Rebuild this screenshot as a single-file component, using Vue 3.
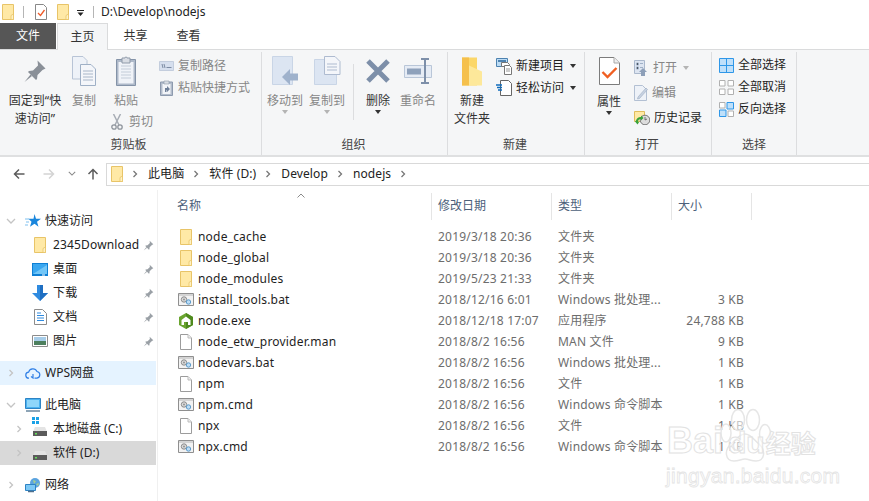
<script setup>
const files = [
  { name: 'node_cache', icon: 'folder', date: '2019/3/18 20:36', type: '文件夹', size: '' },
  { name: 'node_global', icon: 'folder', date: '2019/3/18 20:36', type: '文件夹', size: '' },
  { name: 'node_modules', icon: 'folder', date: '2019/5/23 21:33', type: '文件夹', size: '' },
  { name: 'install_tools.bat', icon: 'bat', date: '2018/12/16 6:01', type: 'Windows 批处理...', size: '3 KB' },
  { name: 'node.exe', icon: 'node', date: '2018/12/18 17:07', type: '应用程序', size: '24,788 KB' },
  { name: 'node_etw_provider.man', icon: 'file', date: '2018/8/2 16:56', type: 'MAN 文件', size: '9 KB' },
  { name: 'nodevars.bat', icon: 'bat', date: '2018/8/2 16:56', type: 'Windows 批处理...', size: '1 KB' },
  { name: 'npm', icon: 'file', date: '2018/8/2 16:56', type: '文件', size: '1 KB' },
  { name: 'npm.cmd', icon: 'bat', date: '2018/8/2 16:56', type: 'Windows 命令脚本', size: '1 KB' },
  { name: 'npx', icon: 'file', date: '2018/8/2 16:56', type: '文件', size: '1 KB' },
  { name: 'npx.cmd', icon: 'bat', date: '2018/8/2 16:56', type: 'Windows 命令脚本', size: '1 KB' },
]
const quick = [
  { name: '2345Download', icon: 'folder', w: 12, h: 16, ml: 2 },
  { name: '桌面', icon: 'desktop', w: 16, h: 13, ml: 0 },
  { name: '下载', icon: 'download', w: 16, h: 16, ml: 0 },
  { name: '文档', icon: 'docs', w: 13, h: 16, ml: 2 },
  { name: '图片', icon: 'pics', w: 16, h: 12, ml: 0 },
]
const crumbs = ['此电脑', '软件 (D:)', 'Develop', 'nodejs']
</script>

<template>
  <div class="page">
    <svg class="defs" aria-hidden="true">
      <symbol id="folder" viewBox="0 0 12 16">
        <path d="M.5.500h11v15H.5z" fill="#ffe9a6" stroke="#e8c468"/>
        <path d="M9 15.500v-4l2.500-1.500v5.500z" fill="#fff2c4" stroke="#e8c468" stroke-width=".8"/>
      </symbol>
      <symbol id="file" viewBox="0 0 12 16">
        <path d="M.5.500h7.500l3.500 3.500v11.500H.5z" fill="#fff" stroke="#9c9c9c"/>
        <path d="M8 .5v3.500h3.500" fill="#eee" stroke="#bdbdbd"/>
      </symbol>
      <symbol id="bat" viewBox="0 0 16 13">
        <path d="M.5.500h15v12H.5z" fill="#f2f2f2" stroke="#8f8f8f"/>
        <path d="M1 1h14v2H1z" fill="#d4d4d4"/>
        <circle cx="6" cy="6.500" r="2.700" fill="#dcdcdc" stroke="#8a8a8a"/>
        <circle cx="6" cy="6.500" r=".9" fill="#8a8a8a"/>
        <circle cx="10.500" cy="9" r="2.200" fill="#bcdcf5" stroke="#5d9ccc"/>
      </symbol>
      <symbol id="node" viewBox="0 0 16 16">
        <path d="M8 0l7 4v8l-7 4-7-4V4z" fill="#6aa52f"/>
        <path d="M8 0l7 4v8l-7 4z" fill="#4f8a1f"/>
        <path d="M8 3.500L12.500 7v5H10V9H6v3H3.500V7z" fill="#fff"/>
      </symbol>
      <symbol id="pin" viewBox="0 0 24 24">
        <path d="M14.500 1.500l8 8-3 1.500-5 5-.5 4-1 1-8-8 1-1 4-.5 5-5z" fill="currentColor"/>
        <path d="M7.500 15.500L1.500 23l7.500-6z" fill="currentColor"/>
      </symbol>
      <symbol id="desktop" viewBox="0 0 16 13">
        <path d="M0 0h16v13H0z" fill="#0e7fd4"/>
        <path d="M1 1h14v10H1z" fill="#3aa7f0"/>
        <path d="M1 11l14-9v9z" fill="#72c6f7"/>
        <path d="M10 11.500h3v1h-3z" fill="#fff"/>
      </symbol>
      <symbol id="download" viewBox="0 0 16 16">
        <path d="M5 0h6v8h5l-8 8-8-8h5z" fill="#2f8be0"/>
        <path d="M8 0h3v8h5l-8 8z" fill="#1f6fc2"/>
      </symbol>
      <symbol id="docs" viewBox="0 0 13 16">
        <path d="M.5.500h8l4 4v11H.500z" fill="#fff" stroke="#8c8c8c"/>
        <path d="M3 4h4M3 6.500h7M3 9h7M3 11.500h7" stroke="#2f8be0"/>
      </symbol>
      <symbol id="pics" viewBox="0 0 16 12">
        <path d="M.5.500h15v11H.5z" fill="#fff" stroke="#8c8c8c"/>
        <path d="M2 2h12v4H2z" fill="#a7cde9"/>
        <path d="M2 6h12v4H2z" fill="#4d7f5e"/>
      </symbol>
      <symbol id="star" viewBox="0 0 16 14">
        <path d="M9.500 0l1.500 4.700h5l-4 3 1.500 5-4-3-4.500 3 1.500-5-3-3h5z" fill="#1a86dc"/>
        <path d="M0 5h4M1 8h3M0 11h3" stroke="#7fc0ef"/>
      </symbol>
      <symbol id="wps" viewBox="0 0 16 12">
        <path d="M4 11.200a3 3 0 0 1-.4-6A4.500 4.500 0 0 1 12 4.500a3.400 3.400 0 0 1 0 6.700H9.500M8 7v4l-2-1.500" fill="none" stroke="#2f7fe6" stroke-width="1.200"/>
      </symbol>
      <symbol id="pc" viewBox="0 0 16 15">
        <path d="M.5.500h15v10H.5z" fill="#4bb2f0" stroke="#2d83c4"/>
        <path d="M2 2h12v7H2z" fill="#8fd6fa"/>
        <path d="M1 12h14v2H1z" fill="#8da4b6"/>
      </symbol>
      <symbol id="drive" viewBox="0 0 14 9">
        <path d="M2 0h10l2 4.500H0z" fill="#e4e4e4"/>
        <path d="M0 4h14v5H0z" fill="#5b5b5b"/>
        <path d="M2 6h2v1.500H2z" fill="#64e05a"/>
      </symbol>
      <symbol id="win" viewBox="0 0 7 7">
        <path d="M0 0h3v3H0zM4 0h3v3H4zM0 4h3v3H0zM4 4h3v3H4z" fill="#1aa1e6"/>
      </symbol>
      <symbol id="net" viewBox="0 0 16 15">
        <circle cx="10" cy="5" r="5" fill="#5ba4df"/>
        <path d="M8 2l3 1-2 3zM11 6l3-1-1 3z" fill="#a6cf8e"/>
        <path d="M.5 6.500h10v6H.5z" fill="#7cc8f5" stroke="#2d83c4"/>
        <path d="M3 13.500h6" stroke="#4f6f8c" stroke-width="1.500"/>
      </symbol>
      <symbol id="chev" viewBox="0 0 8 8"><path d="M2.500 1L5.500 4l-3 3" fill="none" stroke="currentColor" stroke-width="1.300"/></symbol>
      <symbol id="down" viewBox="0 0 10 6"><path d="M1 1l4 4 4-4" fill="none" stroke="currentColor" stroke-width="1.300"/></symbol>
      <symbol id="pages" viewBox="0 0 24 30">
        <path d="M.5.500H11l4 4V23H.5z" fill="#eef2f8" stroke="#b8c4d6"/>
        <path d="M8.500 8.500H19l4.500 4.500v16.500h-15z" fill="#f4f6fa" stroke="#9fb0c6"/>
        <path d="M11 15h10M11 18h10M11 21h10M11 24h10" stroke="#a8b6c8"/>
      </symbol>
      <symbol id="clip" viewBox="0 0 20 30">
        <path d="M.5 3.500h19v26H.5z" fill="#aeb9c9" stroke="#8493a8"/>
        <path d="M2.500 6h15v21.500h-15z" fill="#f0f3f8"/>
        <path d="M5 10h10M5 13h10M5 16h10M5 19h10M5 22h10" stroke="#c3ccd8"/>
        <path d="M6 2h3a1 1 0 0 1 2 0h3v5H6z" fill="#d9dde4" stroke="#8f9aa9"/>
      </symbol>
      <symbol id="scissors" viewBox="0 0 12 16">
        <path d="M2.500 0L8 11M9.500 0L4 11" stroke="#a7adb5" stroke-width="1.500"/>
        <circle cx="3" cy="13" r="2.200" fill="none" stroke="#8f959d" stroke-width="1.300"/>
        <circle cx="9" cy="13" r="2.200" fill="none" stroke="#8f959d" stroke-width="1.300"/>
      </symbol>
      <symbol id="path" viewBox="0 0 15 10">
        <path d="M.5.500h14v9H.5z" fill="#d6dfee" stroke="#c3cddd"/>
        <path d="M3 3l1 4M5 3l1 4M7.500 6.500h5" stroke="#7c8ba3"/>
      </symbol>
      <symbol id="shortcut" viewBox="0 0 13 16">
        <path d="M.5 2h12v13.500H.5z" fill="#b3bdcc" stroke="#8d9aae"/>
        <path d="M2.500 4h8v10h-8z" fill="#f2f4f8"/>
        <path d="M4 1h5v3H4z" fill="#d9dde4" stroke="#8f9aa9" stroke-width=".6"/>
        <path d="M5 12V8h2V6l3 3-3 3v-2H6.500v2z" fill="#6f8099"/>
      </symbol>
      <symbol id="move" viewBox="0 0 27 30">
        <path d="M.5.500h20v28H.5z" fill="#dce5f2" stroke="#c9d5e6"/>
        <path d="M10 21l8-8v4.500h8v7h-8V29z" fill="#9fb2cc"/>
      </symbol>
      <symbol id="copyto" viewBox="0 0 27 30">
        <path d="M.5 3.500h22v25H.5z" fill="#dce5f2" stroke="#c9d5e6"/>
        <path d="M10.500.500H21l5 5v13H10.500z" fill="#f4f6fa" stroke="#aebbd0"/>
        <path d="M13 8h10M13 11h10M13 14h10" stroke="#aebbd0"/>
      </symbol>
      <symbol id="del" viewBox="0 0 26 26">
        <path d="M3 3l20 20M23 3L3 23" stroke="#7d8fa9" stroke-width="5"/>
      </symbol>
      <symbol id="rename" viewBox="0 0 28 26">
        <path d="M.5 7.500h27v12H.5z" fill="#e6ecf5" stroke="#b9c6d8"/>
        <path d="M3 10.500h14v6H3z" fill="#8ea1bb"/>
        <path d="M17 1h8M17 25h8M21 1v24" stroke="#7d8fa9" stroke-width="2"/>
      </symbol>
      <symbol id="newfolder" viewBox="0 0 20 29">
        <path d="M0 1h15v28H0z" fill="#fbd76a"/>
        <path d="M0 1h7v28H0z" fill="#f5c04c"/>
        <path d="M7 9l13 6v14H7z" fill="#fde89a"/>
      </symbol>
      <symbol id="newitem" viewBox="0 0 16 17">
        <path d="M.5.500h11v8H.5z" fill="#bcdcf5" stroke="#4d82b0"/>
        <path d="M2 2h8v2H2z" fill="#4d82b0"/>
        <path d="M5.500 4.500h6l2 2v2H5.500z" fill="#fff" stroke="#777"/>
        <path d="M8.500 7.500h5l2 2v7h-7z" fill="#fff" stroke="#777"/>
        <path d="M10 11h4M10 13h4" stroke="#999"/>
      </symbol>
      <symbol id="easy" viewBox="0 0 16 16">
        <path d="M4.500.500h8l3 3v12h-11z" fill="#fff" stroke="#666"/>
        <path d="M0 5h6M1 7.500h5M2 10h4" stroke="#0f6cbd" stroke-width="1.300"/>
      </symbol>
      <symbol id="props" viewBox="0 0 21 28">
        <path d="M.5.500H15l5.500 5.500v21.500H.5z" fill="#fff" stroke="#7c7c7c"/>
        <path d="M15 .5V6h5.500" fill="#eee" stroke="#a8a8a8"/>
        <path d="M3.500 15l5 5 9-9" fill="none" stroke="#f05f22" stroke-width="2.400"/>
      </symbol>
      <symbol id="open" viewBox="0 0 15 16">
        <path d="M.5.500h10v13H.500z" fill="#dde5f1" stroke="#aab8cc"/>
        <path d="M2.500 3h2v2h-2zM2.500 7h2v2h-2zM6 3.500h3M6 7.500h3" stroke="#9fb0c6"/>
        <path d="M7 16v-4H5l4-4 4 4h-2v4z" fill="#8d9fb8"/>
      </symbol>
      <symbol id="edit" viewBox="0 0 14 16">
        <path d="M.5.500h8l4 4v11H.5z" fill="#eef2f8" stroke="#b3c0d3"/>
        <path d="M4 12L12 3l1.500 1.500-8 9-2 .5z" fill="#c7d2e2" stroke="#9dacc1" stroke-width=".6"/>
      </symbol>
      <symbol id="history" viewBox="0 0 16 14">
        <path d="M.5.500h10v10H.5z" fill="#ffe9a6" stroke="#e0bd5c"/>
        <circle cx="11" cy="9" r="4.800" fill="#dcdcdc" stroke="#777"/>
        <path d="M11 6v3l2-1" fill="none" stroke="#555" stroke-width=".8"/>
        <path d="M2 9.500a5 5 0 0 1 5-3.500v-1.500l2.500 2.500L7 9.500V8a3 3 0 0 0-3 3l1.500-.5L3.500 13.500 1 10.500z" fill="#3aa33a"/>
      </symbol>
      <symbol id="selAll" viewBox="0 0 15 15">
        <path d="M.5.500h14v14H.5z" fill="#bfe0fa" stroke="#2e97e8"/>
        <path d="M7.500 0v15M0 7.500h15" stroke="#2e97e8"/>
      </symbol>
      <symbol id="selNone" viewBox="0 0 15 15">
        <path d="M.5.500h5.500v5.500H.5zM9 .5h5.500v5.500H9zM.5 9H6v5.500H.5zM9 9h5.500v5.500H9z" fill="#fff" stroke="#b0b0b0"/>
      </symbol>
      <symbol id="selInv" viewBox="0 0 15 15">
        <path d="M8 .5h6.500V7H8zM.5 8H7v6.500H.5z" fill="#bfe0fa" stroke="#2e97e8"/>
        <path d="M.5.500h5.500v5.500H.5zM9 9h5.500v5.500H9z" fill="#fff" stroke="#b0b0b0"/>
      </symbol>
    </svg>

    <div class="titlebar">
      <svg class="folder-sm"><use href="#folder"/></svg>
      <i class="tsep"></i>
      <svg class="tdoc" viewBox="0 0 12 16">
        <path d="M.5.500h8l3 3v12H.5z" fill="#fff" stroke="#888"/>
        <path d="M3 9l2.500 2.500L9.500 6" fill="none" stroke="#ef5a28" stroke-width="1.300"/>
      </svg>
      <svg class="folder-sm second"><use href="#folder"/></svg>
      <svg class="qdown" viewBox="0 0 8 8"><path d="M0 1h7v1H0zM.5 3.500h6L3.500 7z" fill="#222"/></svg>
      <i class="tsep last"></i>
      <span class="title">D:\Develop\nodejs</span>
    </div>

    <div class="tabs">
      <div class="tab file">文件</div>
      <div class="tab home">主页</div>
      <div class="tab share">共享</div>
      <div class="tab view">查看</div>
    </div>

    <div class="ribbon">
      <section class="grp g1">
        <div class="grp-body">
          <div class="big pinb"><svg class="ic pin-ic" width="24" height="24"><use href="#pin"/></svg><span>固定到“快<br>速访问”</span></div>
          <div class="big copyb dim"><svg class="ic" width="24" height="30"><use href="#pages"/></svg><span>复制</span></div>
          <div class="pastecol">
            <div class="big dim"><svg class="ic" width="20" height="30"><use href="#clip"/></svg><span>粘贴</span></div>
            <div class="small dim cut"><svg width="12" height="16"><use href="#scissors"/></svg><span>剪切</span></div>
          </div>
          <div class="smalls clipsmall dim">
            <div class="small"><svg width="15" height="10"><use href="#path"/></svg><span>复制路径</span></div>
            <div class="small"><svg class="inset" width="13" height="16"><use href="#shortcut"/></svg><span>粘贴快捷方式</span></div>
          </div>
        </div>
        <div class="grp-label">剪贴板</div>
      </section>

      <section class="grp g2">
        <div class="grp-body">
          <div class="big w42 dim"><svg class="ic" width="27" height="30"><use href="#move"/></svg><span>移动到</span><i class="arrow light"></i></div>
          <div class="big w42 dim"><svg class="ic" width="27" height="30"><use href="#copyto"/></svg><span>复制到</span><i class="arrow light"></i></div>
          <i class="vsep"></i>
          <div class="big w48"><svg class="ic" width="26" height="26"><use href="#del"/></svg><span>删除</span><i class="arrow"></i></div>
          <div class="big w38 dim"><svg class="ic" width="28" height="26"><use href="#rename"/></svg><span>重命名</span></div>
        </div>
        <div class="grp-label">组织</div>
      </section>

      <section class="grp g3">
        <div class="grp-body">
          <div class="big w48"><svg class="ic" width="20" height="29"><use href="#newfolder"/></svg><span>新建<br>文件夹</span></div>
          <div class="smalls newsmall">
            <div class="small"><svg width="16" height="17"><use href="#newitem"/></svg><span>新建项目</span><i class="arrow inline"></i></div>
            <div class="small"><svg width="16" height="16"><use href="#easy"/></svg><span>轻松访问</span><i class="arrow inline"></i></div>
          </div>
        </div>
        <div class="grp-label">新建</div>
      </section>

      <section class="grp g4">
        <div class="grp-body">
          <div class="big w48 propsb"><svg class="ic" width="21" height="28"><use href="#props"/></svg><span>属性</span><i class="arrow"></i></div>
          <div class="smalls opensmall">
            <div class="small dim"><svg width="15" height="16"><use href="#open"/></svg><span>打开</span><i class="arrow light inline"></i></div>
            <div class="small dim"><svg width="14" height="16"><use href="#edit"/></svg><span>编辑</span></div>
            <div class="small"><svg width="16" height="14"><use href="#history"/></svg><span>历史记录</span></div>
          </div>
        </div>
        <div class="grp-label">打开</div>
      </section>

      <section class="grp g5">
        <div class="grp-body">
          <div class="smalls selsmall">
            <div class="small"><svg width="15" height="15"><use href="#selAll"/></svg><span>全部选择</span></div>
            <div class="small"><svg width="15" height="15"><use href="#selNone"/></svg><span>全部取消</span></div>
            <div class="small"><svg width="15" height="15"><use href="#selInv"/></svg><span>反向选择</span></div>
          </div>
        </div>
        <div class="grp-label">选择</div>
      </section>
    </div>

    <div class="navbar">
      <svg class="nav back" viewBox="0 0 12 12"><path d="M11.500 6H1.500M6 1.500L1.500 6 6 10.500" fill="none" stroke="#5c5c5c" stroke-width="1.500"/></svg>
      <svg class="nav fwd" viewBox="0 0 12 12"><path d="M.5 6h10M6 1.500L10.500 6 6 10.500" fill="none" stroke="#d4d4d4" stroke-width="1.500"/></svg>
      <svg class="navdown"><use href="#down"/></svg>
      <svg class="nav up" viewBox="0 0 12 12"><path d="M6 11.500V1.500M1.500 6L6 1.500 10.500 6" fill="none" stroke="#5c5c5c" stroke-width="1.500"/></svg>
      <div class="address">
        <svg class="addr-folder"><use href="#folder"/></svg>
        <template v-for="c in crumbs" :key="c">
          <svg class="crumb-chev"><use href="#chev"/></svg>
          <span class="crumb">{{ c }}</span>
        </template>
        <svg class="crumb-chev"><use href="#chev"/></svg>
      </div>
    </div>

    <div class="content">
      <aside class="side">
        <div class="row head"><svg class="tw"><use href="#down"/></svg><svg class="nico" width="16" height="14"><use href="#star"/></svg><span>快速访问</span></div>
        <div v-for="q in quick" :key="q.name" class="row qrow">
          <svg class="sub-ic" :width="q.w" :height="q.h" :style="{ marginLeft: q.ml + 'px', marginRight: (16 - q.w - q.ml) + 'px' }"><use :href="'#' + q.icon"/></svg>
          <span class="qname">{{ q.name }}</span>
          <svg class="qpin" width="11" height="11"><use href="#pin"/></svg>
        </div>
        <div class="row head wps"><svg class="tw right"><use href="#chev"/></svg><svg class="nico" width="16" height="12"><use href="#wps"/></svg><span>WPS网盘</span></div>
        <div class="row head pc"><svg class="tw"><use href="#down"/></svg><svg class="nico" width="16" height="15"><use href="#pc"/></svg><span>此电脑</span></div>
        <div class="row drive"><svg class="tw right"><use href="#chev"/></svg><span class="driveic"><svg class="winl" width="7" height="7"><use href="#win"/></svg><svg width="14" height="9"><use href="#drive"/></svg></span><span>本地磁盘 (C:)</span></div>
        <div class="row drive active"><svg class="tw right"><use href="#chev"/></svg><span class="driveic"><svg width="14" height="9"><use href="#drive"/></svg></span><span>软件 (D:)</span></div>
        <div class="row head net"><svg class="tw right"><use href="#chev"/></svg><svg class="nico" width="16" height="15"><use href="#net"/></svg><span>网络</span></div>
      </aside>

      <main class="main">
        <svg class="sort" viewBox="0 0 8 5"><path d="M.5 4.500L4 1l3.500 3.500" fill="none" stroke="#8a8a8a"/></svg>
        <div class="thead">
          <div class="th">名称</div>
          <div class="th">修改日期</div>
          <div class="th">类型</div>
          <div class="th">大小</div>
        </div>
        <div v-for="f in files" :key="f.name" class="tr">
          <div class="td name">
            <svg v-if="f.icon === 'folder' || f.icon === 'file'" class="fic" width="12" height="16"><use :href="'#' + f.icon"/></svg>
            <svg v-else-if="f.icon === 'bat'" class="fic" width="16" height="13"><use href="#bat"/></svg>
            <svg v-else class="fic" width="16" height="16"><use href="#node"/></svg>
            <span>{{ f.name }}</span>
          </div>
          <div class="td">{{ f.date }}</div>
          <div class="td">{{ f.type }}</div>
          <div class="td size">{{ f.size }}</div>
        </div>
      </main>
    </div>

    <div class="watermark" aria-hidden="true">
      <svg class="paw" viewBox="0 0 60 60">
        <g fill="rgba(255,255,255,.6)" stroke="#e6e6e6" stroke-width="1.500">
          <ellipse cx="6" cy="25" rx="5" ry="9"/>
          <ellipse cx="18" cy="12" rx="6.500" ry="10.500"/>
          <ellipse cx="33" cy="12" rx="6.500" ry="10.500"/>
          <ellipse cx="45" cy="26" rx="5.500" ry="9.500"/>
          <path d="M25 26c6 0 9 6 14 10 7 6 6 17-3 17-5 0-7-2-11-2s-6 2-11 2c-9 0-10-11-3-17 5-4 8-10 14-10z"/>
        </g>
      </svg>
      <div class="wm-top"><span>Bai</span><span class="wm-du">du</span><span class="wm-cn">经验</span></div>
      <div class="wm-url">jingyan.baidu.com</div>
    </div>
  </div>
</template>

<style scoped>
.page { position: relative; width: 869px; height: 501px; overflow: hidden; background: #fff; color: #1e1e1e; font: 12px/16px "Noto Sans", "Noto Sans CJK SC", sans-serif; }
.defs { position: absolute; width: 0; height: 0; }
svg { display: block; flex: none; }

.titlebar { display: flex; align-items: center; height: 23px; padding-left: 2px; }
.folder-sm { width: 12px; height: 16px; margin-top: 1px; }
.folder-sm.second { margin-left: 10px; }
.tsep { width: 1px; height: 12px; background: #b5b5b5; margin: 0 11px 0 9px; }
.tsep.last { margin: 0 7px 0 8px; }
.tdoc { width: 12px; height: 16px; margin-top: 1px; }
.qdown { width: 8px; height: 8px; margin-left: 8px; margin-top: 3px; }
.title { color: #222; padding-top: 1px; }

.tabs { display: flex; height: 27px; }
.tab { display: flex; align-items: center; justify-content: center; height: 26px; color: #333; }
.tab.file { width: 56px; background: #565656; color: #fff; }
.tab.home { width: 51px; margin-left: 1px; height: 27px; background: #f5f6f7; border: 1px solid #dadbdc; border-bottom: 0; box-sizing: border-box; position: relative; z-index: 1; }
.tab.share { width: 53px; margin-left: 1px; }
.tab.view { width: 53px; }

.ribbon { display: flex; height: 108px; box-sizing: border-box; background: #f5f6f7; border-top: 1px solid #dadbdc; border-bottom: 2px solid #dfe0e1; margin-top: -1px; padding-top: 2px; }
.grp { display: flex; flex-direction: column; height: 103px; box-sizing: border-box; border-right: 1px solid #dcdddf; flex: none; }
.g1 { width: 262px; padding-left: 4px; }
.g2 { width: 186px; padding-left: 2px; }
.g3 { width: 137px; }
.g4 { width: 127px; }
.g5 { width: 85px; }
.grp-body { display: flex; flex: 1; min-height: 0; }
.grp-label { height: 19px; line-height: 18px; text-align: center; color: #444; flex: none; }
.g1 .grp-label { margin-left: -8px; }
.g2 .grp-label { margin-left: -4px; }
.g3 .grp-label, .g4 .grp-label { margin-left: -2px; }

.big { position: relative; display: flex; flex-direction: column; align-items: center; text-align: center; color: #333; flex: none; line-height: 18px; padding-top: 4px; }
.big .ic { height: 30px; margin-bottom: 6px; }
.pin-ic { color: #8a9098; }
.big.propsb .ic { margin-bottom: 7px; }
.big.dim, .dim { color: #868686; }
.pinb { width: 62px; }
.copyb { width: 36px; }
.pastecol { width: 48px; flex: none; }
.w42 { width: 42px; }
.w48 { width: 48px; }
.w38 { width: 38px; margin-left: -3px; white-space: nowrap; }
.vsep { width: 1px; height: 56px; margin: 12px 0 0 5px; background: #dcdddf; flex: none; }

.small { display: flex; align-items: center; gap: 4px; height: 22px; white-space: nowrap; }
.smalls { display: flex; flex-direction: column; }
.dim .small, .small.dim { color: #868686; }
.inset { margin: 0 1px; }
.cut { gap: 6px; padding-left: 9px; height: 20px; margin-top: 2px; }
.clipsmall { margin: 3px 0 0 9px; }
.newsmall { margin: 3px 0 0 0; }
.opensmall { margin: 3px 0 0 1px; }
.opensmall .small { height: 25px; }
.selsmall { margin: 2px 0 0 7px; }

.arrow { display: block; width: 0; height: 0; border: 3px solid transparent; border-top: 4px solid #333; border-bottom: 0; margin-top: 0; }
.arrow.light { border-top-color: #b4b4b4; }
.arrow.inline { margin: 0 0 0 2px; }

.navbar { display: flex; align-items: center; height: 33px; padding-left: 13px; box-sizing: border-box; }
.nav { width: 12px; height: 12px; margin-top: 1px; }
.fwd { margin-left: 18px; }
.navdown { width: 8px; height: 5px; margin-left: 13px; color: #888; }
.up { margin-left: 11px; }
.address { display: flex; align-items: center; height: 23px; flex: 1; margin-left: 7px; padding-left: 4px; border: 1px solid #d9d9d9; border-right: 0; box-sizing: border-box; margin-top: 1px; }
.addr-folder { width: 12px; height: 16px; }
.crumb { margin: 0 8px 0 9px; color: #222; letter-spacing: .1px; }
.crumb-chev { width: 8px; height: 8px; color: #777; }
.addr-folder + .crumb-chev { margin-left: 8px; }

.content { display: flex; height: 311px; }
.side { width: 158px; padding-top: 19px; box-sizing: border-box; border-right: 1px solid #f0f0f0; height: 311px; flex: none; }
.row { display: flex; align-items: center; height: 24px; width: 156px; white-space: nowrap; color: #222; }
.tw { width: 10px; height: 6px; margin-left: 6px; color: #c4c4c4; }
.tw.right { width: 8px; height: 8px; margin-left: 7px; }
.head .nico { margin-left: 9px; margin-right: 4px; }
.head.wps .nico, .head.net .nico { margin-left: 10px; }
.head.wps { margin-top: 8px; background: #e5f3ff; }
.head.pc { margin-top: 8px; }
.qrow { padding-left: 32px; box-sizing: border-box; }
.qname { margin-left: 5px; letter-spacing: .15px; }
.qpin { position: absolute; left: 143px; color: #9aa0a6; }
.drive .tw.right { margin-left: 15px; }
.driveic { position: relative; display: block; width: 14px; height: 9px; margin: 4px 6px 0 10px; flex: none; }
.winl { position: absolute; left: -1px; top: -10px; }
.active { background: #d9d9d9; }
.drive.active { margin-bottom: 8px; }

.main { position: relative; flex: 1; }
.sort { position: absolute; left: 139px; top: 3px; width: 8px; height: 5px; }
.thead { display: grid; grid-template-columns: 274px 120px 120px 80px; height: 36px; box-sizing: border-box; padding-top: 3px; }
.th { height: 27px; line-height: 26px; padding-left: 6px; box-sizing: border-box; border-right: 1px solid #e5e5e5; color: #4c607a; }
.th:first-child { padding-left: 19px; }
.tr { display: grid; grid-template-columns: 274px 120px 120px 72px; height: 21px; align-items: center; color: #6d6d6d; letter-spacing: .2px; }
.td { padding-left: 6px; white-space: nowrap; }
.td.name { display: flex; align-items: center; padding-left: 22px; color: #1e1e1e; }
.fic { margin-right: 6px; }
.td.name svg[width="16"] { margin-left: -2px; margin-right: 4px; }
.td.size { text-align: right; padding: 0; }

.watermark { position: absolute; left: 665px; top: 408px; width: 160px; height: 80px; pointer-events: none; }
.paw { position: absolute; left: 55px; top: 0; width: 60px; height: 60px; }
.wm-top { position: absolute; left: 2px; top: 11px; display: flex; align-items: baseline; font: bold 36px/44px "Liberation Sans", sans-serif; color: rgba(255,255,255,.55); -webkit-text-stroke: 1px #e2e2e2; }
.wm-du { font-size: 30px; margin-left: 5px; }
.wm-cn { font: bold 25px/44px "Noto Sans CJK SC", sans-serif; margin-left: 1px; }
.wm-url { position: absolute; left: 1px; top: 57px; font: 21px/22px "Liberation Sans", sans-serif; letter-spacing: .3px; color: rgba(255,255,255,.5); -webkit-text-stroke: .8px #e4e4e4; white-space: nowrap; }
</style>
